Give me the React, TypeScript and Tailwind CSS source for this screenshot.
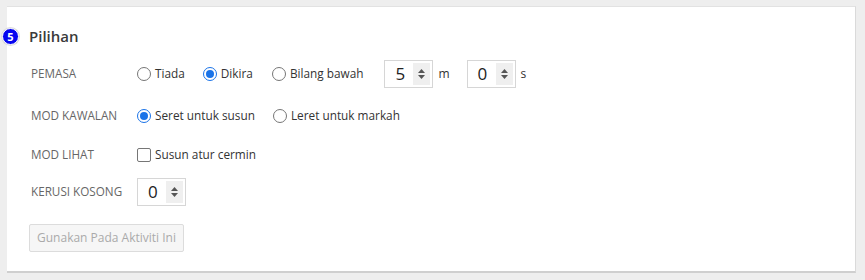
import React from 'react';

const Radio = ({ checked, label }: { checked?: boolean; label: string }) => (
  <label className="flex items-center gap-[4px] text-[11.8px] text-[#333]">
    {checked ? (
      <span className="w-[14px] h-[14px] rounded-full border-[1.5px] border-[#1a73e8] flex items-center justify-center bg-white">
        <span className="w-[8px] h-[8px] rounded-full bg-[#1a73e8]" />
      </span>
    ) : (
      <span className="w-[14px] h-[14px] rounded-full border border-[#767676] bg-white" />
    )}
    <span>{label}</span>
  </label>
);

const Spinner = ({ value }: { value: string }) => (
  <div className="flex h-[28px] w-[49px] border border-[#d6d6d6] bg-white">
    <div className="flex-1 flex items-center pl-[10px] text-[17px] text-[#222]">{value}</div>
    <div className="w-[17px] my-[2px] mr-[2px] bg-[#efefef] flex flex-col items-center justify-center gap-[2px]">
      <svg width="7" height="4" viewBox="0 0 7 4"><path d="M0 4 L3.5 0 L7 4 Z" fill="#555" /></svg>
      <svg width="7" height="4" viewBox="0 0 7 4"><path d="M0 0 L3.5 4 L7 0 Z" fill="#555" /></svg>
    </div>
  </div>
);

const Row = ({ label, className, children }: { label: string; className?: string; children: React.ReactNode }) => (
  <div className={`flex items-center h-[28px] ${className ?? ''}`}>
    <div className="w-[108px] pl-[2px] text-[11.7px] text-[#666]">{label}</div>
    <div className="flex items-center">{children}</div>
  </div>
);

export default function App() {
  return (
    <div className="w-[865px] h-[280px] bg-[#eeeeee] pt-[6px] pl-[7px]" style={{ fontFamily: '"Open Sans", sans-serif' }}>
      <div className="relative w-[849px] h-[267px] bg-white border-t border-[#e2e2e2] border-r border-r-[#dadada] border-b-2 border-b-[#cfcfcf] pt-[18px] pl-[22px]">
        <div className="absolute left-[-5px] top-[21px] w-[17px] h-[17px] rounded-full bg-[#0505f0] border-[1.5px] border-white shadow-[0_0_0_1px_#ddd] flex items-center justify-center text-white text-[11px] font-bold leading-none">
          5
        </div>
        <div className="h-[22px] leading-[22px] text-[15px] font-semibold text-[#3a3a3a]">Pilihan</div>

        <Row label="PEMASA" className="mt-[13px]">
          <Radio label="Tiada" />
          <div className="w-[18px]" />
          <Radio checked label="Dikira" />
          <div className="w-[19px]" />
          <Radio label="Bilang bawah" />
          <div className="w-[21px]" />
          <Spinner value="5" />
          <span className="ml-[5px] text-[12px] text-[#333]">m</span>
          <div className="w-[17px]" />
          <Spinner value="0" />
          <span className="ml-[5px] text-[12px] text-[#333]">s</span>
        </Row>

        <Row label="MOD KAWALAN" className="mt-[14px]">
          <Radio checked label="Seret untuk susun" />
          <div className="w-[18px]" />
          <Radio label="Leret untuk markah" />
        </Row>

        <Row label="MOD LIHAT" className="mt-[11px]">
          <label className="flex items-center gap-[4px] text-[11.8px] text-[#333]">
            <span className="w-[14px] h-[14px] rounded-[2px] border border-[#767676] bg-white" />
            <span>Susun atur cermin</span>
          </label>
        </Row>

        <Row label="KERUSI KOSONG" className="mt-[9px]">
          <Spinner value="0" />
        </Row>

        <button
          disabled
          className="mt-[18px] h-[28px] w-[155px] border border-[#dcdcdc] bg-[#f6f6f6] text-[12px] text-[#aaa] rounded-[2px]"
        >
          Gunakan Pada Aktiviti Ini
        </button>
      </div>
    </div>
  );
}
